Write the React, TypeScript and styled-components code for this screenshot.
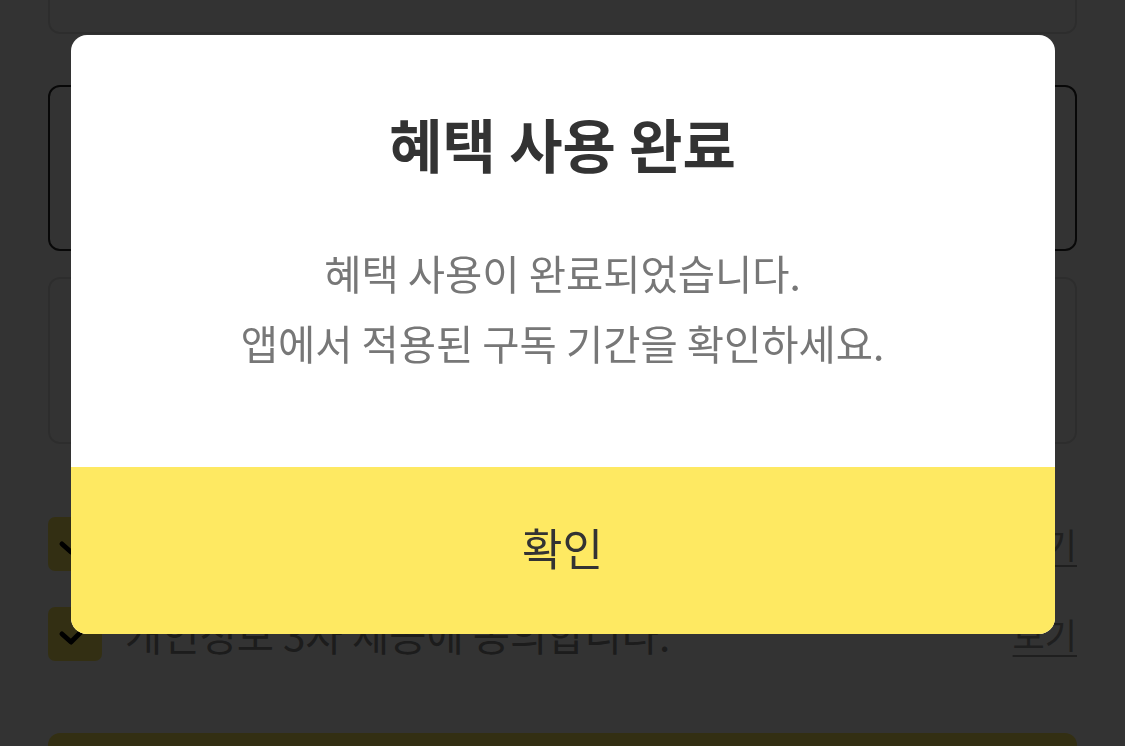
import React from "react";
import styled, { createGlobalStyle } from "styled-components";

const GlobalStyle = createGlobalStyle`
  html, body {
    margin: 0;
    padding: 0;
    background: #ffffff;
    overflow: hidden;
  }
  body {
    font-family: "Noto Sans CJK KR", "Noto Sans", sans-serif;
  }
`;

const Page = styled.div`
  display: flex;
  flex-direction: column;
  padding: 0 48px;
  height: 746px;
  box-sizing: border-box;
  overflow: hidden;
`;

const Card = styled.div<{ $selected?: boolean; $top: number; $height: number }>`
  box-sizing: border-box;
  height: ${(p) => p.$height}px;
  margin-top: ${(p) => p.$top}px;
  border-radius: 12px;
  border: 2px solid ${(p) => (p.$selected ? "#2a2a2a" : "#e0e0e0")};
  background: #ffffff;
  flex-shrink: 0;
`;

const AgreeList = styled.div`
  display: flex;
  flex-direction: column;
  gap: 36px;
  margin-top: 73px;
  flex-shrink: 0;
`;

const AgreeRow = styled.div`
  display: flex;
  align-items: center;
  height: 54px;
  gap: 23px;
`;

const CheckBox = styled.div`
  width: 54px;
  height: 54px;
  border-radius: 7px;
  background: #fee962;
  flex-shrink: 0;
  display: flex;
  align-items: center;
  justify-content: center;
`;

const AgreeText = styled.span`
  flex: 1;
  font-size: 40.5px;
  color: #8a8a8a;
  line-height: 54px;
  white-space: nowrap;
`;

const ViewLink = styled.span`
  font-size: 35px;
  color: #9a9a9a;
  line-height: 54px;
  text-decoration: underline;
  text-underline-offset: 6px;
  text-decoration-thickness: 2px;
`;

const SubmitButton = styled.div`
  margin-top: 72px;
  height: 110px;
  border-radius: 12px;
  background: #fee962;
  flex-shrink: 0;
`;

const Overlay = styled.div`
  position: fixed;
  inset: 0;
  background: rgba(0, 0, 0, 0.8);
  display: flex;
  justify-content: center;
  align-items: flex-start;
  padding-top: 35px;
  box-sizing: border-box;
`;

const Modal = styled.div`
  width: 984px;
  background: #ffffff;
  border-radius: 16px;
  overflow: hidden;
  display: flex;
  flex-direction: column;
`;

const ModalBody = styled.div`
  display: flex;
  flex-direction: column;
  align-items: center;
  padding: 72px 24px 89px;
`;

const Title = styled.h1`
  margin: 0;
  font-size: 58px;
  font-weight: 700;
  line-height: 72px;
  color: #333333;
`;

const Message = styled.p`
  margin: 59px 0 0;
  font-size: 40.5px;
  line-height: 70px;
  color: #777777;
  text-align: center;
`;

const ConfirmButton = styled.button`
  height: 167px;
  border: none;
  background: #fee962;
  font-family: "Noto Sans CJK KR", "Noto Sans", sans-serif;
  font-size: 44px;
  color: #333333;
  cursor: pointer;
  padding: 0 0 8px;
`;

const Check = () => (
  <svg width="54" height="54" viewBox="0 0 54 54" fill="none">
    <path
      d="M14 27 L23 35 L39 19"
      stroke="#000"
      strokeWidth="5"
      strokeLinecap="round"
      strokeLinejoin="round"
    />
  </svg>
);

export default function App() {
  return (
    <>
      <GlobalStyle />
      <Page>
        <Card $top={-86} $height={120} />
        <Card $top={51} $height={166} $selected />
        <Card $top={26} $height={167} />
        <AgreeList>
          <AgreeRow>
            <CheckBox>
              <Check />
            </CheckBox>
            <AgreeText>서비스 이용약관에 동의합니다.</AgreeText>
            <ViewLink>보기</ViewLink>
          </AgreeRow>
          <AgreeRow>
            <CheckBox>
              <Check />
            </CheckBox>
            <AgreeText>개인정보 3자 제공에 동의합니다.</AgreeText>
            <ViewLink>보기</ViewLink>
          </AgreeRow>
        </AgreeList>
        <SubmitButton />
      </Page>
      <Overlay>
        <Modal>
          <ModalBody>
            <Title>혜택 사용 완료</Title>
            <Message>
              혜택 사용이 완료되었습니다.
              <br />
              앱에서 적용된 구독 기간을 확인하세요.
            </Message>
          </ModalBody>
          <ConfirmButton>확인</ConfirmButton>
        </Modal>
      </Overlay>
    </>
  );
}
